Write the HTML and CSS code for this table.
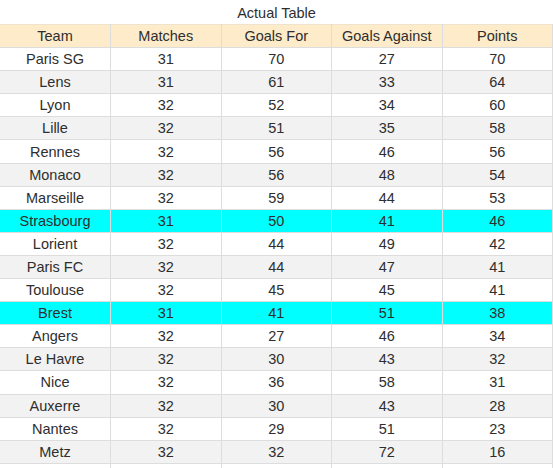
FILE: index.html
```html
<!DOCTYPE html>
<html>
<head>
<meta charset="utf-8">
<link rel="stylesheet" href="styles.css">
</head>
<body>
<table class="league">
  <caption class="title">Actual Table</caption>
  <thead>
    <tr><th>Team</th><th>Matches</th><th>Goals For</th><th>Goals Against</th><th>Points</th></tr>
  </thead>
  <tbody>
    <tr><td>Paris SG</td><td>31</td><td>70</td><td>27</td><td>70</td></tr>
    <tr><td>Lens</td><td>31</td><td>61</td><td>33</td><td>64</td></tr>
    <tr><td>Lyon</td><td>32</td><td>52</td><td>34</td><td>60</td></tr>
    <tr><td>Lille</td><td>32</td><td>51</td><td>35</td><td>58</td></tr>
    <tr><td>Rennes</td><td>32</td><td>56</td><td>46</td><td>56</td></tr>
    <tr><td>Monaco</td><td>32</td><td>56</td><td>48</td><td>54</td></tr>
    <tr><td>Marseille</td><td>32</td><td>59</td><td>44</td><td>53</td></tr>
    <tr class="hl"><td>Strasbourg</td><td>31</td><td>50</td><td>41</td><td>46</td></tr>
    <tr><td>Lorient</td><td>32</td><td>44</td><td>49</td><td>42</td></tr>
    <tr><td>Paris FC</td><td>32</td><td>44</td><td>47</td><td>41</td></tr>
    <tr><td>Toulouse</td><td>32</td><td>45</td><td>45</td><td>41</td></tr>
    <tr class="hl"><td>Brest</td><td>31</td><td>41</td><td>51</td><td>38</td></tr>
    <tr><td>Angers</td><td>32</td><td>27</td><td>46</td><td>34</td></tr>
    <tr><td>Le Havre</td><td>32</td><td>30</td><td>43</td><td>32</td></tr>
    <tr><td>Nice</td><td>32</td><td>36</td><td>58</td><td>31</td></tr>
    <tr><td>Auxerre</td><td>32</td><td>30</td><td>43</td><td>28</td></tr>
    <tr><td>Nantes</td><td>32</td><td>29</td><td>51</td><td>23</td></tr>
    <tr><td>Metz</td><td>32</td><td>32</td><td>72</td><td>16</td></tr>
    <tr class="blank"><td></td><td></td><td></td><td></td><td></td></tr>
  </tbody>
</table>
</body>
</html>
```
FILE: styles.css
```css
html, body {
  margin: 0;
  padding: 0;
  background: #ffffff;
}
body {
  font-family: "Liberation Sans", Arial, sans-serif;
  font-size: 14.5px;
  color: #2e2e2e;
  overflow: hidden;
}
.league {
  width: 553px;
  border-collapse: collapse;
  table-layout: fixed;
}
.title {
  height: 24px;
  line-height: 26px;
  font-size: 14.5px;
  color: #2e2e2e;
  text-align: center;
}
.league th,
.league td {
  padding: 0;
  text-align: center;
  font-weight: normal;
  border: 1px solid #dddddd;
  border-top: none;
  height: 22.1px;
  line-height: 22px;
}
.league th:first-child,
.league td:first-child {
  border-left: none;
}
.league th {
  background: #fdebc9;
  border-top: 1px solid #eee3cc;
}
.league tbody tr:nth-child(even) td {
  background: #f2f2f2;
}
.league tbody tr.hl td {
  background: #00ffff;
}
.league tbody tr.blank td {
  background: #ffffff;
  border-bottom: none;
}
```
